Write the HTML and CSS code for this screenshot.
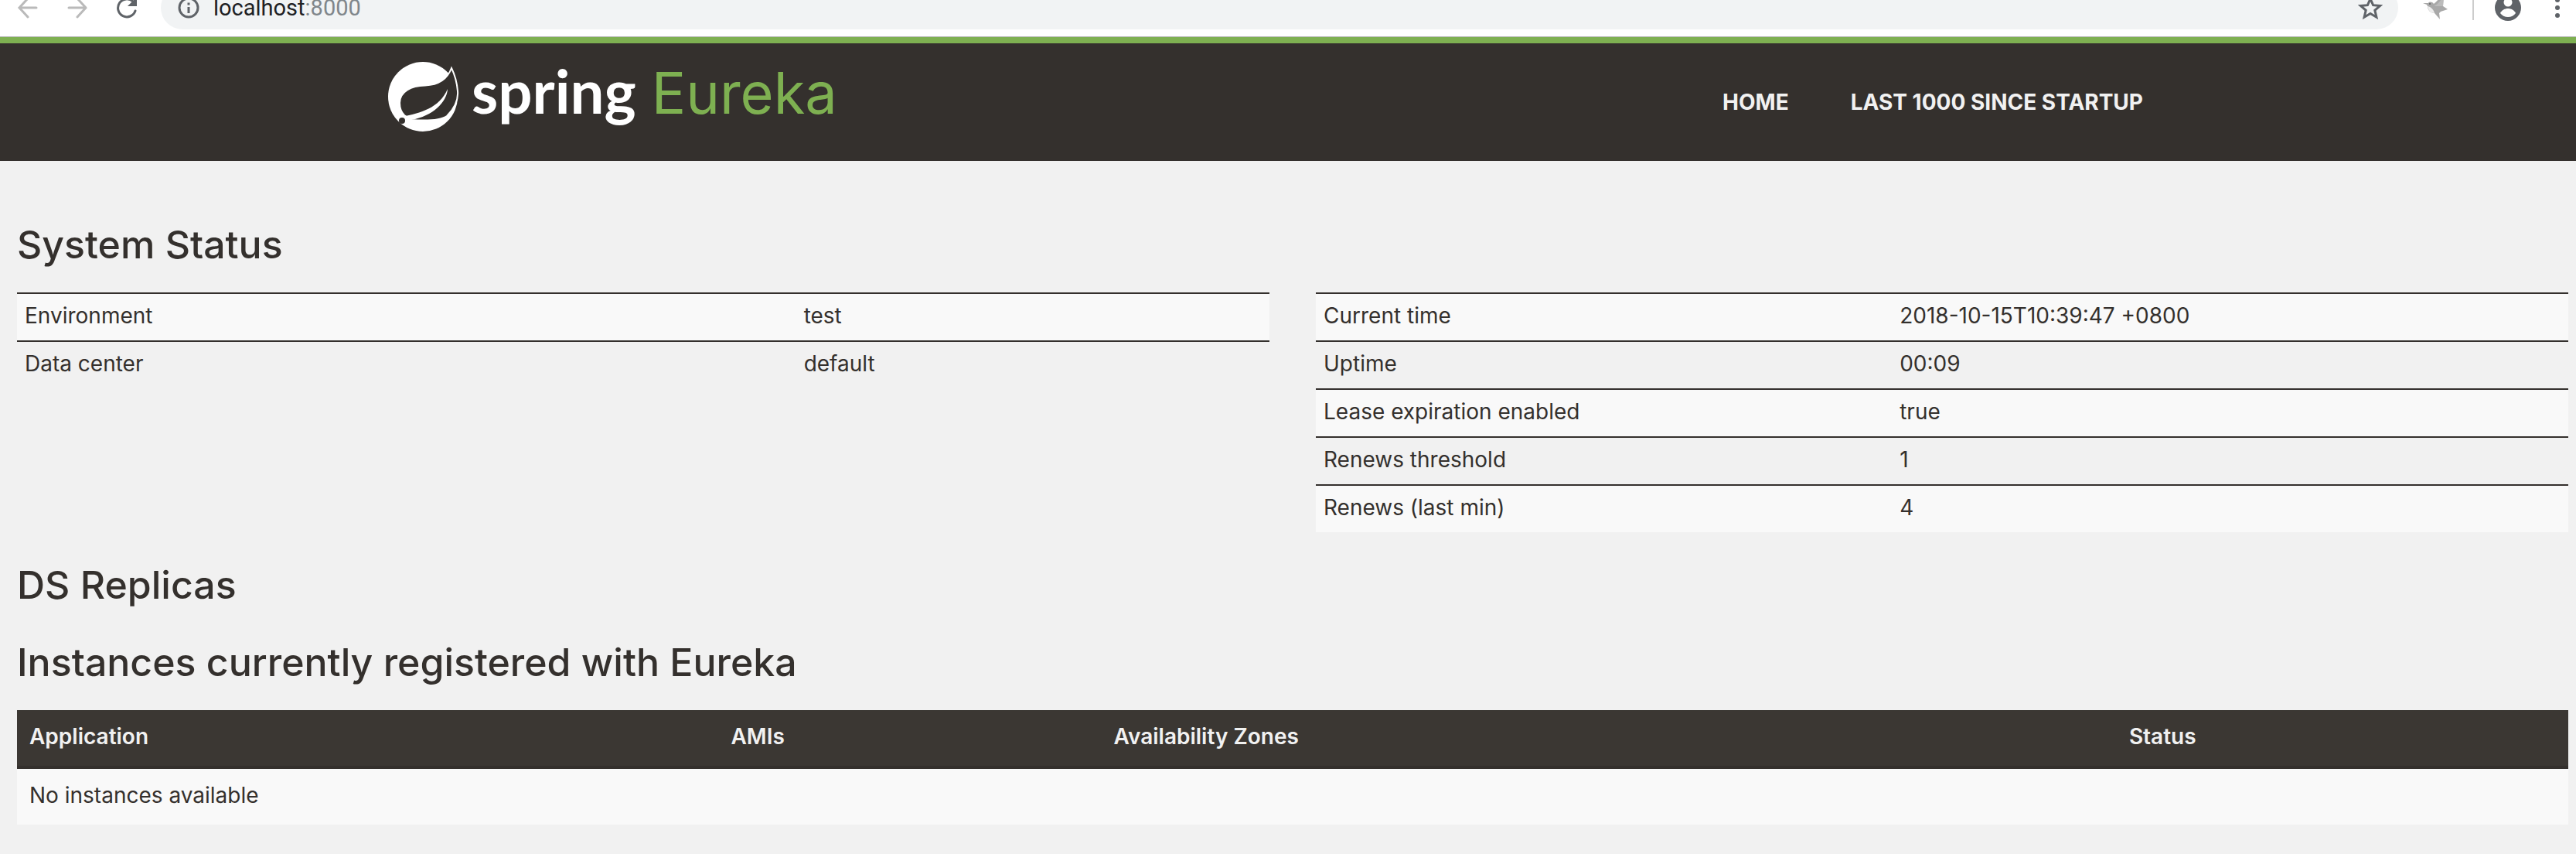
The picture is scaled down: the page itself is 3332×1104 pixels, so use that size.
FILE: index.html
```
<!DOCTYPE html>
<html lang="en">
<head>
<meta charset="utf-8">
<meta name="viewport" content="width=device-width, initial-scale=1">
<title>Eureka</title>
<link rel="stylesheet" href="styles.css">
</head>
<body>
<div class="browser">
  <div class="toolbar">
    <button class="tool tool-muted" type="button" aria-label="Back"><svg viewBox="0 0 40 40"><path d="M31 20H9M20 8L9 20l11 12" fill="none" stroke="currentColor" stroke-width="3" stroke-linecap="round"/></svg></button>
    <button class="tool tool-muted" type="button" aria-label="Forward"><svg viewBox="0 0 40 40"><path d="M9 20h22M20 8l11 12-11 12" fill="none" stroke="currentColor" stroke-width="3" stroke-linecap="round"/></svg></button>
    <button class="tool" type="button" aria-label="Reload"><svg viewBox="0 0 40 40"><path d="M31 24A11.500 11.500 0 1 1 28 12" fill="none" stroke="currentColor" stroke-width="3" stroke-linecap="round"/><path d="M33 6v12H21z" fill="currentColor"/></svg></button>
    <div class="omnibox">
      <button class="tool" type="button" aria-label="Site information"><svg viewBox="0 0 40 40"><circle cx="20" cy="20" r="12" fill="none" stroke="currentColor" stroke-width="3"/><path d="M18.500 19h3v8h-3zM18.500 13.500h3v3h-3z" fill="currentColor"/></svg></button>
      <div class="address" role="textbox" aria-label="Address" contenteditable="true" spellcheck="false">localhost<span class="address-port">:8000</span></div>
      <button class="tool" type="button" aria-label="Bookmark"><svg viewBox="0 0 40 40"><path d="M20 8.500l3.600 8.200 9 .8-6.800 5.900 2.100 8.800-7.900-4.700-7.900 4.700 2.100-8.800-6.800-5.900 9-.8z" fill="none" stroke="currentColor" stroke-width="3"/></svg></button>
    </div>
    <button class="tool tool-extension" type="button" aria-label="Extension"><svg viewBox="0 0 40 40"><path d="M4 14l7 0c1-2 5-2 7 1C22 12 25 7 31 4l-1 14 6 4-9 3-2 2 1 8-7-8c-5 0-9-4-9-9l-1-2z" fill="#a9a9a9"/><path d="M10 18c1 6 4 9 9 9-1-4-4-8-9-9z" fill="#ededed"/><path d="M18 18c5-2 9-7 13-14l-1 14z" fill="#bcbcbc"/><circle cx="13" cy="15" r="1" fill="#666"/></svg></button>
    <span class="separator"></span>
    <button class="tool" type="button" aria-label="Profile"><svg viewBox="0 0 40 40"><circle cx="20" cy="20" r="17" fill="currentColor"/><circle cx="20" cy="13" r="5.500" fill="#fff"/><path d="M10 27c2-4 6-6 10-6s8 2 10 6c-2 3-6 5-10 5s-8-2-10-5z" fill="#fff"/></svg></button>
    <button class="tool" type="button" aria-label="Menu"><svg viewBox="0 0 40 40" fill="currentColor"><circle cx="20" cy="10" r="3"/><circle cx="20" cy="20" r="3"/><circle cx="20" cy="30" r="3"/></svg></button>
  </div>
</div>

<header class="site-header">
  <div class="header-inner">
    <a class="brand" href="#home" aria-label="Spring Eureka">
      <svg class="brand-mark" viewBox="0 0 92 90">
        <circle cx="45" cy="45" r="45" fill="#fff"/>
        <path d="M82 8C76 24 64 30 48 30.500C30 31 15 38 15 53C15 60 17 65 21 69L30 75C45 76 66 77 76 70C86 60 91 50 90 38C89 26 86 16 82 8Z" fill="#34302d" stroke="#fff" stroke-width="2"/>
        <path d="M18 71C42 66 66 60 77 35C76 52 58 70 30 75L22 79Z" fill="#fff"/>
        <circle cx="18" cy="76" r="4" fill="#34302d"/>
      </svg>
      <span class="wordmark"><span class="word-spring">spring</span><span class="word-eureka">Eureka</span></span>
    </a>
    <nav class="nav">
      <a class="nav-link" href="#home">HOME</a>
      <a class="nav-link" href="#lastn">LAST 1000 SINCE STARTUP</a>
    </nav>
  </div>
</header>

<main class="content">
  <h1 class="section-title">System Status</h1>
  <div class="panels">
    <table class="status status-wide">
      <tbody>
        <tr><th scope="row">Environment</th><td>test</td></tr>
        <tr><th scope="row">Data center</th><td>default</td></tr>
      </tbody>
    </table>
    <table class="status">
      <tbody>
        <tr><th scope="row">Current time</th><td>2018-10-15T10:39:47 +0800</td></tr>
        <tr><th scope="row">Uptime</th><td>00:09</td></tr>
        <tr><th scope="row">Lease expiration enabled</th><td>true</td></tr>
        <tr><th scope="row">Renews threshold</th><td>1</td></tr>
        <tr><th scope="row">Renews (last min)</th><td>4</td></tr>
      </tbody>
    </table>
  </div>

  <h1 class="section-title section-title-empty">DS Replicas</h1>

  <h1 class="section-title">Instances currently registered with Eureka</h1>
  <table class="instances">
    <colgroup><col class="col-app"><col class="col-amis"><col class="col-zones"><col></colgroup>
    <thead>
      <tr><th scope="col">Application</th><th scope="col">AMIs</th><th scope="col">Availability Zones</th><th scope="col">Status</th></tr>
    </thead>
    <tbody>
      <tr><td colspan="4">No instances available</td></tr>
    </tbody>
  </table>
</main>
</body>
</html>
```
FILE: styles.css
```
* { box-sizing: border-box; }

body {
  margin: 0;
  background: #f1f1f1;
  color: #34302d;
  font: 28px/40px Inter, "Liberation Sans", sans-serif;
}

/* Browser toolbar, scrolled partly out of view */
.browser {
  height: 48px;
  overflow: hidden;
  background: #fff;
  border-bottom: 1px solid #b3b3b3;
}
.toolbar {
  display: flex;
  align-items: center;
  gap: 24px;
  margin-top: -18px;
  padding: 0 4px 0 16px;
}
.tool {
  flex: none;
  width: 40px;
  height: 40px;
  padding: 0;
  border: 0;
  background: none;
  color: #5f6368;
}
.tool svg { display: block; width: 100%; height: 100%; }
.tool-muted { color: #bababa; }
.tool-extension { margin: 0 4px; }
.omnibox {
  flex: 1;
  display: flex;
  align-items: center;
  gap: 12px;
  height: 56px;
  padding: 0 16px;
  border-radius: 28px;
  background: #f1f3f4;
}
.address {
  flex: 1;
  color: #202124;
  font: 29px/40px Roboto, "Liberation Sans", sans-serif;
}
.address-port { color: #80868b; }
.separator { width: 2px; height: 32px; background: #ccc; }

/* Site header */
.site-header {
  border-top: 8px solid #7eb051;
  background: #34302d;
}
.header-inner {
  display: flex;
  align-items: center;
  justify-content: space-between;
  max-width: 2340px;
  min-height: 152px;
  margin: 0 auto;
  padding: 0 24px 0 6px;
}
.brand {
  display: flex;
  align-self: flex-start;
  gap: 16px;
  padding-top: 24px;
  text-decoration: none;
}
.brand-mark { flex: none; width: 92px; height: 90px; }
.wordmark { display: flex; align-items: baseline; gap: 20px; line-height: 74px; }
.word-spring { color: #fff; font: 700 78px/74px Lato, sans-serif; }
.word-eureka { color: #7eb051; font: 400 74px/74px Inter, sans-serif; }
.nav { display: flex; }
.nav-link {
  padding: 0 40px;
  color: #f1f1f1;
  font-weight: 700;
  text-decoration: none;
}

/* Page content */
.content { padding: 40px 10px 38px 22px; display: flow-root; }
.section-title { margin: 38px 0 32px; font-size: 50px; font-weight: 500; line-height: 60px; }
.section-title-empty { margin-bottom: 40px; }

.panels {
  display: grid;
  grid-template-columns: 1fr 1fr;
  align-items: start;
  gap: 60px;
}
table { width: 100%; border-collapse: separate; border-spacing: 0; table-layout: fixed; }
th { text-align: left; }

.status th, .status td { padding: 8px 10px 12px; border-top: 2px solid #34302d; }
.status th { width: 46%; font-weight: 400; }
.status-wide th { width: 62.2%; }
.status tr:nth-child(odd), .instances tbody tr { background: #f9f9f9; }

.instances th, .instances td { padding: 14px 16px 18px; }
.instances th {
  border-bottom: 4px solid #34302d;
  background: #3b3733;
  color: #f1f1f1;
  font-weight: 600;
}
.col-app { width: 27.5%; }
.col-amis { width: 15%; }
.col-zones { width: 39.8%; }
```
